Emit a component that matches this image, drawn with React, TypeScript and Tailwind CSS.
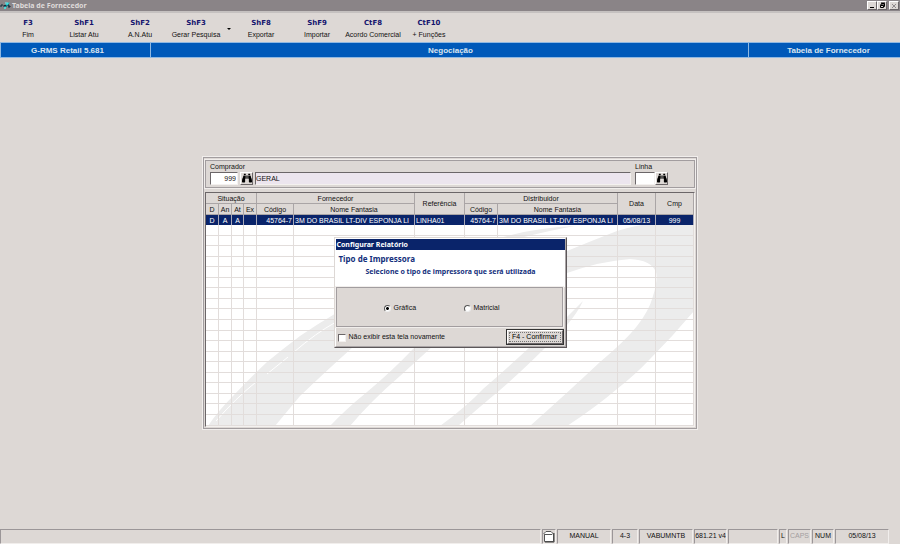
import type { ReactNode } from "react";
import { FaBinoculars } from "react-icons/fa";

const SANS = "font-['Liberation_Sans',Arial,sans-serif]";
const RAISED =
  "border border-t-white border-l-white border-r-[#6b6668] border-b-[#6b6668] bg-[#ddd8d5]";
const SUNKEN =
  "border border-t-[#6b6668] border-l-[#6b6668] border-r-[#f4f1ef] border-b-[#f4f1ef]";
const ETCHED = "border border-[#a29d9f] outline outline-[#f1eeec]";
const RADIO =
  "size-[7px] appearance-none rounded-full border border-t-[#555] border-l-[#555] border-r-[#eee] border-b-[#eee] bg-white checked:bg-[radial-gradient(circle,black_35%,white_45%)]";

type Action = { shortcut: string; label: string; menu?: boolean };

const actions: Action[] = [
  { shortcut: "F3", label: "Fim" },
  { shortcut: "ShF1", label: "Listar Atu" },
  { shortcut: "ShF2", label: "A.N.Atu" },
  { shortcut: "ShF3", label: "Gerar Pesquisa", menu: true },
  { shortcut: "ShF8", label: "Exportar" },
  { shortcut: "ShF9", label: "Importar" },
  { shortcut: "CtF8", label: "Acordo Comercial" },
  { shortcut: "CtF10", label: "+ Funções" },
];

const supplierRow = [
  "D",
  "A",
  "A",
  "",
  "45764-7",
  "3M DO BRASIL LT-DIV ESPONJA LI",
  "LINHA01",
  "45764-7",
  "3M DO BRASIL LT-DIV ESPONJA LI",
  "05/08/13",
  "999",
];

const alignments = [
  "text-center",
  "text-center",
  "text-center",
  "text-center",
  "text-right",
  "text-left",
  "text-left",
  "text-right",
  "text-left",
  "text-center",
  "text-center",
];

function TitleBar() {
  return (
    <header className="flex h-[11px] items-center bg-[#8a8487] pr-px">
      <svg viewBox="0 0 12 9" className="h-[9px] w-3" aria-hidden="true">
        <path d="M4 8 6 3l4-2-2 3-3 4z" fill="#20d4d8" />
        <path d="M1 6V4h2M4 6V4l1 1 1-1v2M9 4H8v1h2v1H8" stroke="#102c3c" fill="none" />
        <path d="M5 2h3M4 7h2" stroke="#5ff" />
      </svg>
      <h1 className="grow text-[7px] leading-none font-bold font-['Noto_Sans',sans-serif] text-[#dfdbda]">
        Tabela de Fornecedor
      </h1>
      <div className="flex">
        <button aria-label="Minimizar" className={`flex h-[9px] w-[10px] items-end justify-center pb-px ${RAISED}`}>
          <span className="h-px w-1 bg-black" />
        </button>
        <button aria-label="Restaurar" className={`flex h-[9px] w-[10px] items-center justify-center ${RAISED}`}>
          <svg viewBox="0 0 7 7" className="size-[7px]" aria-hidden="true">
            <path d="M2.5 2.5v-1h3v3h-1M1.5 3.5h3v2h-3zM2 1h4M1 3h4" stroke="#000" fill="none" />
          </svg>
        </button>
        <button aria-label="Fechar" className={`ml-0.5 flex h-[9px] w-[10px] items-center justify-center ${RAISED}`}>
          <svg viewBox="0 0 6 6" className="size-[6px]" aria-hidden="true">
            <path d="m1 1 4 4M5 1 1 5" stroke="#8f8a8b" />
          </svg>
        </button>
      </div>
    </header>
  );
}

function Toolbar() {
  return (
    <nav className="flex h-[31px] items-center border-t-2 border-[#c5c1c0] pt-0.5">
      {actions.map((a) => (
        <div key={a.shortcut} className="flex">
          <button className="flex w-14 flex-col items-center whitespace-nowrap">
            <span className="text-[7px] leading-3 font-bold font-['DejaVu_Sans',Verdana,sans-serif] text-[#14146e]">
              {a.shortcut}
            </span>
            <span className="text-[7px] leading-3 text-[#111]">{a.label}</span>
          </button>
          {a.menu && (
            <button aria-label="Mais opções" className="flex w-[9px] items-center justify-center">
              <span className="border-x-2 border-t-2 border-x-transparent border-t-black" />
            </button>
          )}
        </div>
      ))}
    </nav>
  );
}

function Banner() {
  return (
    <div className="flex h-4 items-stretch border-y border-[#8fb8e2] bg-[#0059b9] text-[8px] leading-4 font-bold text-[#dce6f0]">
      <div className="w-[151px] border-x border-[#8fb8e2] pr-4 text-center">G-RMS Retail 5.681</div>
      <div className="grow pl-0.5 text-center">Negociação</div>
      <div className="w-[152px] border-l border-[#8fb8e2] pl-2 text-center">Tabela de Fornecedor</div>
    </div>
  );
}

function SearchButton({ label }: { label: string }) {
  return (
    <button aria-label={label} className={`flex h-[13px] w-[13px] items-center justify-center text-black ${RAISED}`}>
      <FaBinoculars className="size-[10px] shrink-0" />
    </button>
  );
}

function Filters() {
  return (
    <form className={`flex h-7 items-start px-1 pt-px ${ETCHED}`}>
      <div className="flex flex-col">
        <label htmlFor="comprador" className="leading-[10px]">
          Comprador
        </label>
        <div className="flex gap-0.5">
          <input id="comprador" defaultValue="999" className={`h-[13px] w-7 bg-white pr-px text-right ${SUNKEN}`} />
          <SearchButton label="Buscar comprador" />
        </div>
      </div>
      <input
        aria-label="Nome do comprador"
        defaultValue="GERAL"
        readOnly
        className={`mt-[10px] ml-0.5 h-[13px] min-w-0 grow bg-[#ece5ee] ${SUNKEN}`}
      />
      <div className="mr-[22px] ml-1 flex flex-col">
        <label htmlFor="linha" className="leading-[10px]">
          Linha
        </label>
        <div className="flex">
          <input id="linha" className={`h-[13px] w-5 bg-white ${SUNKEN}`} />
          <SearchButton label="Buscar linha" />
        </div>
      </div>
    </form>
  );
}

function Watermark() {
  return (
    <svg
      viewBox="0 0 488 202"
      preserveAspectRatio="none"
      className="absolute inset-x-0 bottom-0 h-[202px] w-full"
      aria-hidden="true"
    >
      <g fill="#ececec">
        <path d="M2 202Q12 187 27 172Q44 154 61 138Q78 124 94 112Q110 101 127 91Q210 36 297 13Q334 3 369 2Q346 6 314 14Q220 55 147 123Q118 149 94 172L69 202Z" />
        <path d="M124 202Q140 185 161 168Q185 148 207 125Q280 55 361 27Q385 17 411 7Q430 1 445 0H488V87Q467 112 444 135Q430 150 411 165Q390 183 361 202H324Q361 169 394 138Q420 116 431 102Q443 87 447 72Q452 56 450 48Q445 36 424 35Q395 37 361 49Q290 78 227 122L194 152Q165 177 144 202Z" />
        <path d="M234 202Q260 183 277 165Q300 145 324 123Q350 105 361 93L377 77Q372 88 361 101L341 122Q316 147 294 166Q270 186 252 202Z" />
      </g>
      <path d="M10 197Q30 174 50 158M61 150L82 133M88 128Q110 109 130 98" stroke="#fff" fill="none" />
    </svg>
  );
}

function Head({ children, colSpan, rowSpan }: { children: ReactNode; colSpan?: number; rowSpan?: number }) {
  return (
    <th
      colSpan={colSpan}
      rowSpan={rowSpan}
      className="border-r border-b border-[#aaa5a6] bg-[#ddd8d5] p-0 pt-px text-center font-normal"
    >
      {children}
    </th>
  );
}

function SupplierTable() {
  return (
    <div className={`relative mt-1 bg-white ${SUNKEN}`}>
      <Watermark />
      <table className="relative h-[233px] w-full table-fixed border-separate border-spacing-0 leading-[9px] whitespace-nowrap">
        <colgroup>
          <col className="w-[13px]" />
          <col className="w-[13px]" />
          <col className="w-3" />
          <col className="w-[13px]" />
          <col className="w-[37px]" />
          <col className="w-[121px]" />
          <col className="w-[50px]" />
          <col className="w-[33px]" />
          <col className="w-[120px]" />
          <col className="w-[38px]" />
          <col />
        </colgroup>
        <thead>
          <tr>
            <Head colSpan={4}>Situação</Head>
            <Head colSpan={2}>Fornecedor</Head>
            <Head rowSpan={2}>Referência</Head>
            <Head colSpan={2}>Distribuidor</Head>
            <Head rowSpan={2}>Data</Head>
            <Head rowSpan={2}>Cmp</Head>
          </tr>
          <tr>
            <Head>D</Head>
            <Head>An</Head>
            <Head>At</Head>
            <Head>Ex</Head>
            <Head>Código</Head>
            <Head>Nome Fantasia</Head>
            <Head>Código</Head>
            <Head>Nome Fantasia</Head>
          </tr>
        </thead>
        <tbody>
          <tr className="bg-[#0a246a] text-white">
            {supplierRow.map((value, i) => (
              <td key={i} className={`border-r border-r-[#a9a9b8] px-px pt-px pb-0 ${alignments[i]}`}>
                {value}
              </td>
            ))}
          </tr>
          {Array.from({ length: 19 }, (_, r) => (
            <tr key={r}>
              {supplierRow.map((_, c) => (
                <td key={c} className="border-r border-b border-[#e2dddb] p-0">
                  &nbsp;
                </td>
              ))}
            </tr>
          ))}
        </tbody>
      </table>
    </div>
  );
}

function PrinterDialog() {
  return (
    <div
      role="dialog"
      aria-labelledby="dialog-title"
      className="w-[233px] border border-t-[#ddd8d5] border-l-[#ddd8d5] border-r-[#5c5759] border-b-[#5c5759] bg-[#ddd8d5]"
    >
      <div className="border border-t-white border-l-white border-r-[#aaa5a6] border-b-[#aaa5a6]">
        <h2
          id="dialog-title"
          className="h-[11px] bg-[#0a246a] pl-px text-[7px] leading-[11px] font-bold font-['Noto_Sans',sans-serif] text-white"
        >
          Configurar Relatório
        </h2>
        <div className="h-[37px] bg-white pt-1 font-bold font-['Noto_Sans',sans-serif] text-[#14307c]">
          <h3 className="pl-[3px] text-[8px] leading-[10px]">Tipo de Impressora</h3>
          <p className="pl-[30px] text-[7px] leading-4 whitespace-nowrap">
            Selecione o tipo de impressora que será utilizada
          </p>
        </div>
        <fieldset className={`mr-0.5 flex h-10 items-center pt-0.5 pl-[47px] ${ETCHED}`}>
          <label className="flex w-20 items-center gap-[3px]">
            <input type="radio" name="printer" defaultChecked className={RADIO} />
            Gráfica
          </label>
          <label className="flex items-center gap-[3px]">
            <input type="radio" name="printer" className={RADIO} />
            Matricial
          </label>
        </fieldset>
        <div className="flex h-[19px] items-center justify-between pr-px pl-0.5">
          <label className="flex items-center gap-[3px] pt-0.5">
            <input type="checkbox" className={`size-2 appearance-none bg-white checked:bg-black ${SUNKEN}`} />
            Não exibir esta tela novamente
          </label>
          <button className="border border-[#333] text-black">
            <span className={`block p-px ${RAISED}`}>
              <span className="block h-[10px] w-[52px] border border-dotted border-[#777] leading-2">F4 - Confirmar</span>
            </span>
          </button>
        </div>
      </div>
    </div>
  );
}

function StatusCell({ className, children }: { className: string; children?: ReactNode }) {
  return (
    <div
      className={`flex items-center justify-center overflow-hidden border border-t-[#9b9698] border-l-[#9b9698] border-r-[#f1eeec] border-b-[#f1eeec] whitespace-nowrap ${className}`}
    >
      {children}
    </div>
  );
}

function StatusBar() {
  return (
    <footer className="border-b-2 border-white pr-[11px]">
      <div className="flex h-[15px] gap-px">
        <StatusCell className="grow" />
        <StatusCell className="w-[14px]">
          <svg viewBox="0 0 12 13" className="h-[13px] w-3" aria-hidden="true">
            <path d="M1.5 3.5h9v8h-9z" fill="#fff" stroke="#555" />
            <path d="M1 3.5 3 1.5h5l2 2-1 1H2z" fill="#fff" stroke="#555" />
            <path d="M11 3v9H2" stroke="#444" fill="none" />
          </svg>
        </StatusCell>
        <StatusCell className="w-[54px]">MANUAL</StatusCell>
        <StatusCell className="w-[26px]">4-3</StatusCell>
        <StatusCell className="w-[54px]">VABUMNTB</StatusCell>
        <StatusCell className="w-[33px]">681.21 v4</StatusCell>
        <StatusCell className="w-[50px]" />
        <StatusCell className="w-2">L</StatusCell>
        <StatusCell className="w-[23px] text-[#a39ea0]">CAPS</StatusCell>
        <StatusCell className="w-[22px]">NUM</StatusCell>
        <StatusCell className="w-[54px]">05/08/13</StatusCell>
      </div>
    </footer>
  );
}

export default function App() {
  return (
    <div className={`flex h-screen flex-col bg-[#ddd8d5] text-[7px] text-[#111] ${SANS}`}>
      <TitleBar />
      <Toolbar />
      <Banner />
      <main className="relative flex grow items-center justify-center pb-0.5">
        <section className={`w-[494px] p-px pt-0.5 ${ETCHED}`}>
          <Filters />
          <SupplierTable />
        </section>
        <div className="absolute inset-0 flex items-center justify-center pb-0.5">
          <PrinterDialog />
        </div>
      </main>
      <StatusBar />
    </div>
  );
}
